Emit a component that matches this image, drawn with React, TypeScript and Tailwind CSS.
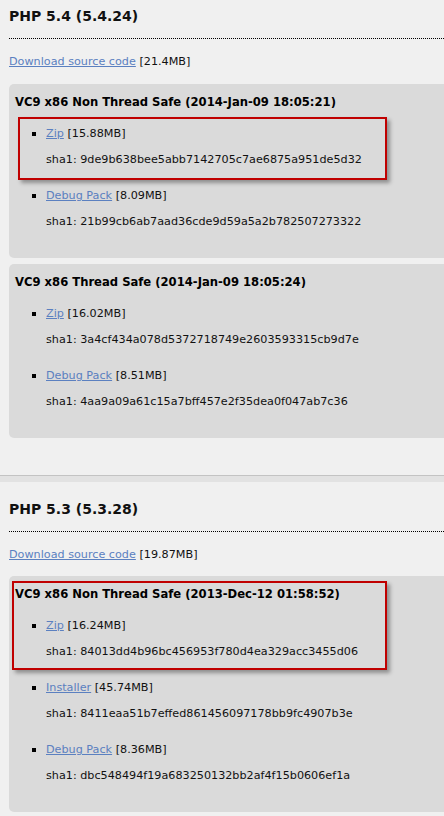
type Pkg = { name: string; size: string; sha: string };

type Build = {
  title: string;
  pkgs: Pkg[];
  mark?: string;
};

type Release = {
  heading: string;
  source: string;
  builds: Build[];
};

const releases: Release[] = [
  {
    heading: 'PHP 5.4 (5.4.24)',
    source: '21.4MB',
    builds: [
      {
        title: 'VC9 x86 Non Thread Safe (2014-Jan-09 18:05:21)',
        mark: 'left-[9px] top-[33px] w-[369px] h-[63px]',
        pkgs: [
          { name: 'Zip', size: '15.88MB', sha: '9de9b638bee5abb7142705c7ae6875a951de5d32' },
          { name: 'Debug Pack', size: '8.09MB', sha: '21b99cb6ab7aad36cde9d59a5a2b782507273322' },
        ],
      },
      {
        title: 'VC9 x86 Thread Safe (2014-Jan-09 18:05:24)',
        pkgs: [
          { name: 'Zip', size: '16.02MB', sha: '3a4cf434a078d5372718749e2603593315cb9d7e' },
          { name: 'Debug Pack', size: '8.51MB', sha: '4aa9a09a61c15a7bff457e2f35dea0f047ab7c36' },
        ],
      },
    ],
  },
  {
    heading: 'PHP 5.3 (5.3.28)',
    source: '19.87MB',
    builds: [
      {
        title: 'VC9 x86 Non Thread Safe (2013-Dec-12 01:58:52)',
        mark: 'left-[3px] top-[5px] w-[375px] h-[89px]',
        pkgs: [
          { name: 'Zip', size: '16.24MB', sha: '84013dd4b96bc456953f780d4ea329acc3455d06' },
          { name: 'Installer', size: '45.74MB', sha: '8411eaa51b7effed861456097178bb9fc4907b3e' },
          { name: 'Debug Pack', size: '8.36MB', sha: 'dbc548494f19a683250132bb2af4f15b0606ef1a' },
        ],
      },
    ],
  },
];

const BuildBox = ({ build }: { build: Build }) => (
  <div className="relative bg-[#dadada] rounded-l-[5px] pl-[6px] pt-[10px] pb-[28px]">
    {build.mark && (
      <div
        className={`absolute ${build.mark} border-2 border-[#c00000] shadow-[3px_3px_4px_rgba(0,0,0,0.35)]`}
      />
    )}
    <h3 className="font-bold text-[11.6px] leading-[16px] text-black whitespace-nowrap">
      {build.title}
    </h3>
    <ul className="mt-[16px] flex flex-col gap-[20px]">
      {build.pkgs.map((p) => (
        <li key={p.name} className="flex flex-col gap-[10px] pl-[31px]">
          <div className="relative leading-[16px]">
            <span className="absolute left-[-14px] top-[6px] w-[4px] h-[4px] bg-black" />
            <a href="#" className="text-[#5b80c0] underline">
              {p.name}
            </a>{' '}
            [{p.size}]
          </div>
          <div className="leading-[16px] whitespace-nowrap">sha1: {p.sha}</div>
        </li>
      ))}
    </ul>
  </div>
);

const Section = ({ release, first }: { release: Release; first?: boolean }) => (
  <section className={first ? 'pt-[6px] pb-[37px]' : 'pt-[17px] pb-[4px]'}>
    <h2 className="ml-[9px] font-bold text-[14px] leading-[20px] pb-[12px] border-b border-dotted border-black">
      {release.heading}
    </h2>
    <p className="ml-[9px] mt-[15px] leading-[16px]">
      <a href="#" className="text-[#5b80c0] underline">
        Download source code
      </a>{' '}
      [{release.source}]
    </p>
    <div className={`ml-[9px] ${first ? 'mt-[14px]' : 'mt-[13px]'} flex flex-col gap-[6px]`}>
      {release.builds.map((b) => (
        <BuildBox key={b.title} build={b} />
      ))}
    </div>
  </section>
);

export default function App() {
  return (
    <div
      className="min-h-[816px] w-[444px] overflow-hidden bg-[#f0f0f0] text-[11.2px] text-[#111]"
      style={{ fontFamily: '"DejaVu Sans", Verdana, sans-serif' }}
    >
      <Section release={releases[0]} first />
      <div className="border-t border-[#c3c3c3] h-[7px] bg-[#e2e2e2]" />
      <Section release={releases[1]} />
    </div>
  );
}
